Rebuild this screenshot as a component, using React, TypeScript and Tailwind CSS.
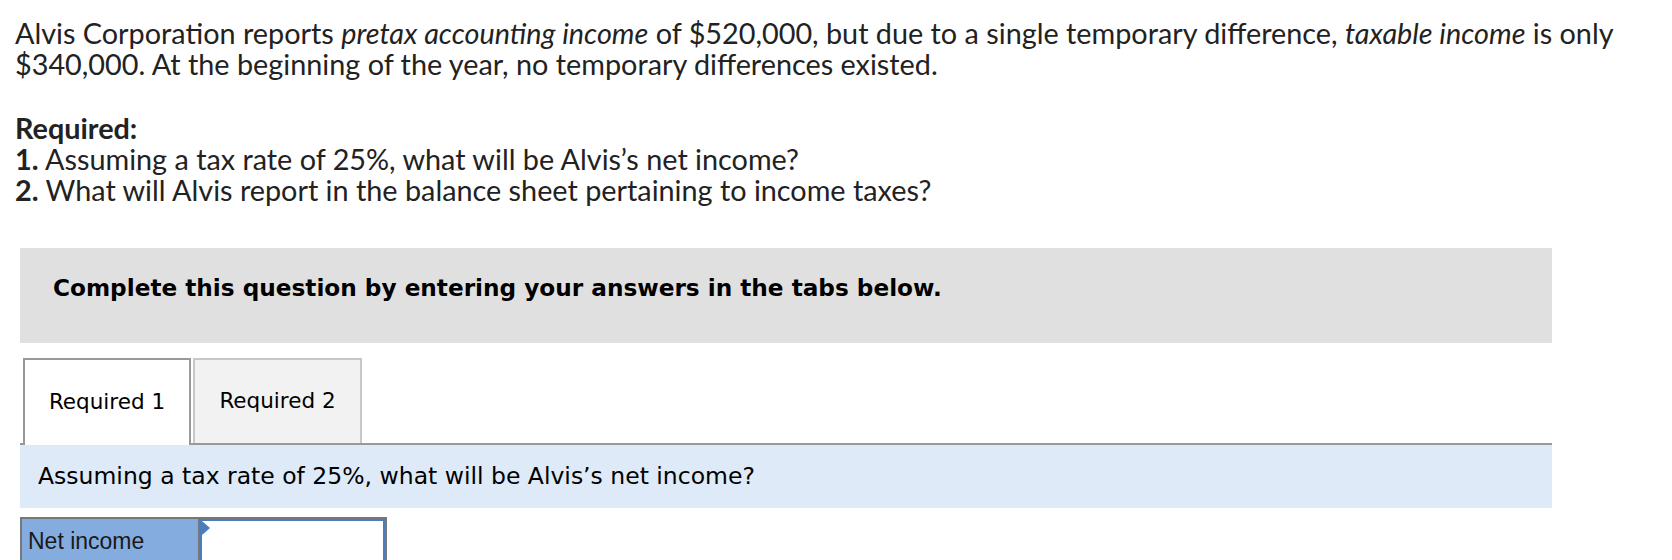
import React from 'react';

const verdana = { fontFamily: '"DejaVu Sans", Verdana, sans-serif' };

const App: React.FC = () => {
  return (
    <div className="bg-white min-h-screen w-[1672px] h-[560px] overflow-hidden text-[#222]">
      <div className="pl-[15px] pt-[18px] text-[28.8px] leading-[31px] font-['Lato',sans-serif]">
        <p>
          Alvis Corporation reports <i>pretax accounting income</i> of $520,000, but due to a single temporary difference,{' '}
          <i>taxable income</i> is only $340,000. At the beginning of the year, no temporary differences existed.
        </p>
        <p className="mt-[33px] font-bold">Required:</p>
        <p>
          <b>1.</b> Assuming a tax rate of 25%, what will be Alvis’s net income?
        </p>
        <p>
          <b>2.</b> What will Alvis report in the balance sheet pertaining to income taxes?
        </p>
      </div>

      <div className="ml-[20px] w-[1532px] mt-[42px]">
        <div className="h-[95px] bg-[#e0e0e0] pl-[33px] pt-[26px]">
          <p className="text-[23.2px] leading-[28px] font-bold text-black" style={verdana}>
            Complete this question by entering your answers in the tabs below.
          </p>
        </div>

        <div className="mt-[15px] flex items-end gap-[2px] border-b-2 border-[#999] pl-[3px] h-[87px]">
          <button
            className="h-[87px] w-[168px] -mb-[2px] bg-white border-2 border-b-0 border-[#999] text-[21.5px] text-black"
            style={verdana}
          >
            Required 1
          </button>
          <button
            className="h-[85px] w-[169px] bg-[#f2f2f2] border-2 border-b-0 border-[#c8c8c8] text-[21.5px] text-black"
            style={verdana}
          >
            Required 2
          </button>
        </div>

        <div className="h-[63px] bg-[#deeaf7] pl-[18px] flex items-center">
          <p className="text-[23.5px] text-black" style={verdana}>
            Assuming a tax rate of 25%, what will be Alvis’s net income?
          </p>
        </div>

        <div className="mt-[9px] flex w-[367px] border-2 border-[#777]">
          <div className="w-[178px] h-[44px] bg-[#85acdf] border-r-2 border-[#777] pl-[6px] flex items-center text-[23px] text-[#1a1a1a] font-['Liberation_Sans',Arial,sans-serif]">
            Net income
          </div>
          <div className="relative flex-1 h-[44px] bg-white border-2 border-[#4a7cc0]">
            <svg className="absolute left-0 top-0" width="8" height="14" viewBox="0 0 8 14">
              <polygon points="0,0 8,7 0,14" fill="#4a7cc0" />
            </svg>
          </div>
        </div>
      </div>
    </div>
  );
};

export default App;
